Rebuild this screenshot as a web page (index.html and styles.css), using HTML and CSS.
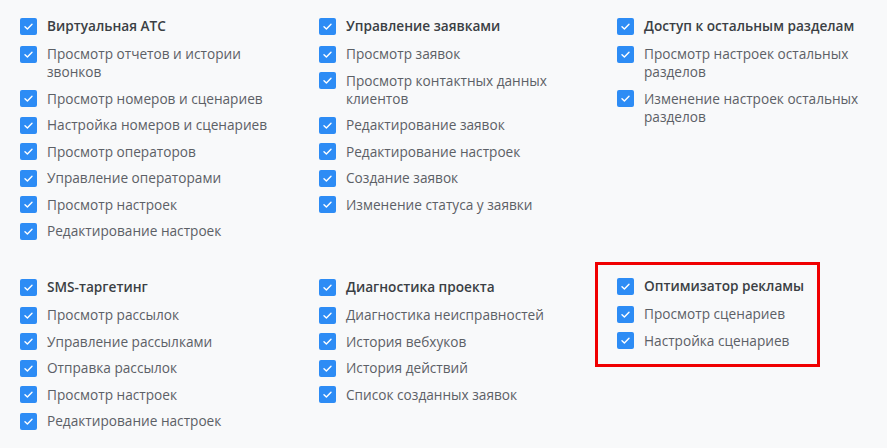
FILE: index.html
```html
<!DOCTYPE html>
<html lang="ru">
<head>
    <meta charset="UTF-8">
    <meta name="viewport" content="width=device-width, initial-scale=1.0">
    <title>Права доступа</title>
    <link rel="stylesheet" href="styles.css">
</head>
<body>
    <div class="permissions">
        <div class="group">
            <label class="item head"><span class="box"><svg viewBox="0 0 17 17"><path d="M5 8.8l2.4 2.3 4.6-4.8"/></svg></span>Виртуальная АТС</label>
            <label class="item"><span class="box"><svg viewBox="0 0 17 17"><path d="M5 8.8l2.4 2.3 4.6-4.8"/></svg></span>Просмотр отчетов и истории звонков</label>
            <label class="item"><span class="box"><svg viewBox="0 0 17 17"><path d="M5 8.8l2.4 2.3 4.6-4.8"/></svg></span>Просмотр номеров и сценариев</label>
            <label class="item"><span class="box"><svg viewBox="0 0 17 17"><path d="M5 8.8l2.4 2.3 4.6-4.8"/></svg></span>Настройка номеров и сценариев</label>
            <label class="item"><span class="box"><svg viewBox="0 0 17 17"><path d="M5 8.8l2.4 2.3 4.6-4.8"/></svg></span>Просмотр операторов</label>
            <label class="item"><span class="box"><svg viewBox="0 0 17 17"><path d="M5 8.8l2.4 2.3 4.6-4.8"/></svg></span>Управление операторами</label>
            <label class="item"><span class="box"><svg viewBox="0 0 17 17"><path d="M5 8.8l2.4 2.3 4.6-4.8"/></svg></span>Просмотр настроек</label>
            <label class="item"><span class="box"><svg viewBox="0 0 17 17"><path d="M5 8.8l2.4 2.3 4.6-4.8"/></svg></span>Редактирование настроек</label>
        </div>
        <div class="group">
            <label class="item head"><span class="box"><svg viewBox="0 0 17 17"><path d="M5 8.8l2.4 2.3 4.6-4.8"/></svg></span>Управление заявками</label>
            <label class="item"><span class="box"><svg viewBox="0 0 17 17"><path d="M5 8.8l2.4 2.3 4.6-4.8"/></svg></span>Просмотр заявок</label>
            <label class="item"><span class="box"><svg viewBox="0 0 17 17"><path d="M5 8.8l2.4 2.3 4.6-4.8"/></svg></span>Просмотр контактных данных клиентов</label>
            <label class="item"><span class="box"><svg viewBox="0 0 17 17"><path d="M5 8.8l2.4 2.3 4.6-4.8"/></svg></span>Редактирование заявок</label>
            <label class="item"><span class="box"><svg viewBox="0 0 17 17"><path d="M5 8.8l2.4 2.3 4.6-4.8"/></svg></span>Редактирование настроек</label>
            <label class="item"><span class="box"><svg viewBox="0 0 17 17"><path d="M5 8.8l2.4 2.3 4.6-4.8"/></svg></span>Создание заявок</label>
            <label class="item"><span class="box"><svg viewBox="0 0 17 17"><path d="M5 8.8l2.4 2.3 4.6-4.8"/></svg></span>Изменение статуса у заявки</label>
        </div>
        <div class="group">
            <label class="item head"><span class="box"><svg viewBox="0 0 17 17"><path d="M5 8.8l2.4 2.3 4.6-4.8"/></svg></span>Доступ к остальным разделам</label>
            <label class="item"><span class="box"><svg viewBox="0 0 17 17"><path d="M5 8.8l2.4 2.3 4.6-4.8"/></svg></span>Просмотр настроек остальных разделов</label>
            <label class="item"><span class="box"><svg viewBox="0 0 17 17"><path d="M5 8.8l2.4 2.3 4.6-4.8"/></svg></span>Изменение настроек остальных разделов</label>
        </div>

        <div class="group">
            <label class="item head"><span class="box"><svg viewBox="0 0 17 17"><path d="M5 8.8l2.4 2.3 4.6-4.8"/></svg></span>SMS-таргетинг</label>
            <label class="item"><span class="box"><svg viewBox="0 0 17 17"><path d="M5 8.8l2.4 2.3 4.6-4.8"/></svg></span>Просмотр рассылок</label>
            <label class="item"><span class="box"><svg viewBox="0 0 17 17"><path d="M5 8.8l2.4 2.3 4.6-4.8"/></svg></span>Управление рассылками</label>
            <label class="item"><span class="box"><svg viewBox="0 0 17 17"><path d="M5 8.8l2.4 2.3 4.6-4.8"/></svg></span>Отправка рассылок</label>
            <label class="item"><span class="box"><svg viewBox="0 0 17 17"><path d="M5 8.8l2.4 2.3 4.6-4.8"/></svg></span>Просмотр настроек</label>
            <label class="item"><span class="box"><svg viewBox="0 0 17 17"><path d="M5 8.8l2.4 2.3 4.6-4.8"/></svg></span>Редактирование настроек</label>
        </div>
        <div class="group">
            <label class="item head"><span class="box"><svg viewBox="0 0 17 17"><path d="M5 8.8l2.4 2.3 4.6-4.8"/></svg></span>Диагностика проекта</label>
            <label class="item"><span class="box"><svg viewBox="0 0 17 17"><path d="M5 8.8l2.4 2.3 4.6-4.8"/></svg></span>Диагностика неисправностей</label>
            <label class="item"><span class="box"><svg viewBox="0 0 17 17"><path d="M5 8.8l2.4 2.3 4.6-4.8"/></svg></span>История вебхуков</label>
            <label class="item"><span class="box"><svg viewBox="0 0 17 17"><path d="M5 8.8l2.4 2.3 4.6-4.8"/></svg></span>История действий</label>
            <label class="item"><span class="box"><svg viewBox="0 0 17 17"><path d="M5 8.8l2.4 2.3 4.6-4.8"/></svg></span>Список созданных заявок</label>
        </div>
        <div class="group">
            <div class="highlight">
                <label class="item head"><span class="box"><svg viewBox="0 0 17 17"><path d="M5 8.8l2.4 2.3 4.6-4.8"/></svg></span>Оптимизатор рекламы</label>
                <label class="item"><span class="box"><svg viewBox="0 0 17 17"><path d="M5 8.8l2.4 2.3 4.6-4.8"/></svg></span>Просмотр сценариев</label>
                <label class="item"><span class="box"><svg viewBox="0 0 17 17"><path d="M5 8.8l2.4 2.3 4.6-4.8"/></svg></span>Настройка сценариев</label>
            </div>
        </div>
    </div>
</body>
</html>
```

FILE: styles.css
```css
body {
    margin: 0;
    background: #f8f9fa;
    font-family: 'Open Sans', 'Noto Sans', sans-serif;
    font-size: 13.65px;
    color: #5c6066;
    overflow: hidden;
}

.permissions {
    display: grid;
    grid-template-columns: 299px 298px 1fr;
    row-gap: 38px;
    padding: 17px 0 0 20px;
}

.group {
    display: flex;
    flex-direction: column;
    align-items: flex-start;
    gap: 8.5px;
}

.item {
    display: flex;
    align-items: flex-start;
    gap: 10px;
    line-height: 18px;
    max-width: 265px;
}

.item.head {
    font-weight: 600;
    color: #3b3f44;
    margin-bottom: 1.6px;
    max-width: none;
}

.box {
    flex: none;
    width: 17px;
    height: 17px;
    margin-top: 0.5px;
    border-radius: 2px;
    background: #2d8cf5;
}

.box svg {
    display: block;
    width: 17px;
    height: 17px;
    fill: none;
    stroke: #fff;
    stroke-width: 1.4;
    stroke-linecap: round;
    stroke-linejoin: round;
}

.highlight {
    display: flex;
    flex-direction: column;
    gap: 8.5px;
    margin: -16px 0 0 -22px;
    padding: 12px 13px 14px 19px;
    border: 3px solid #f00000;
}
```
